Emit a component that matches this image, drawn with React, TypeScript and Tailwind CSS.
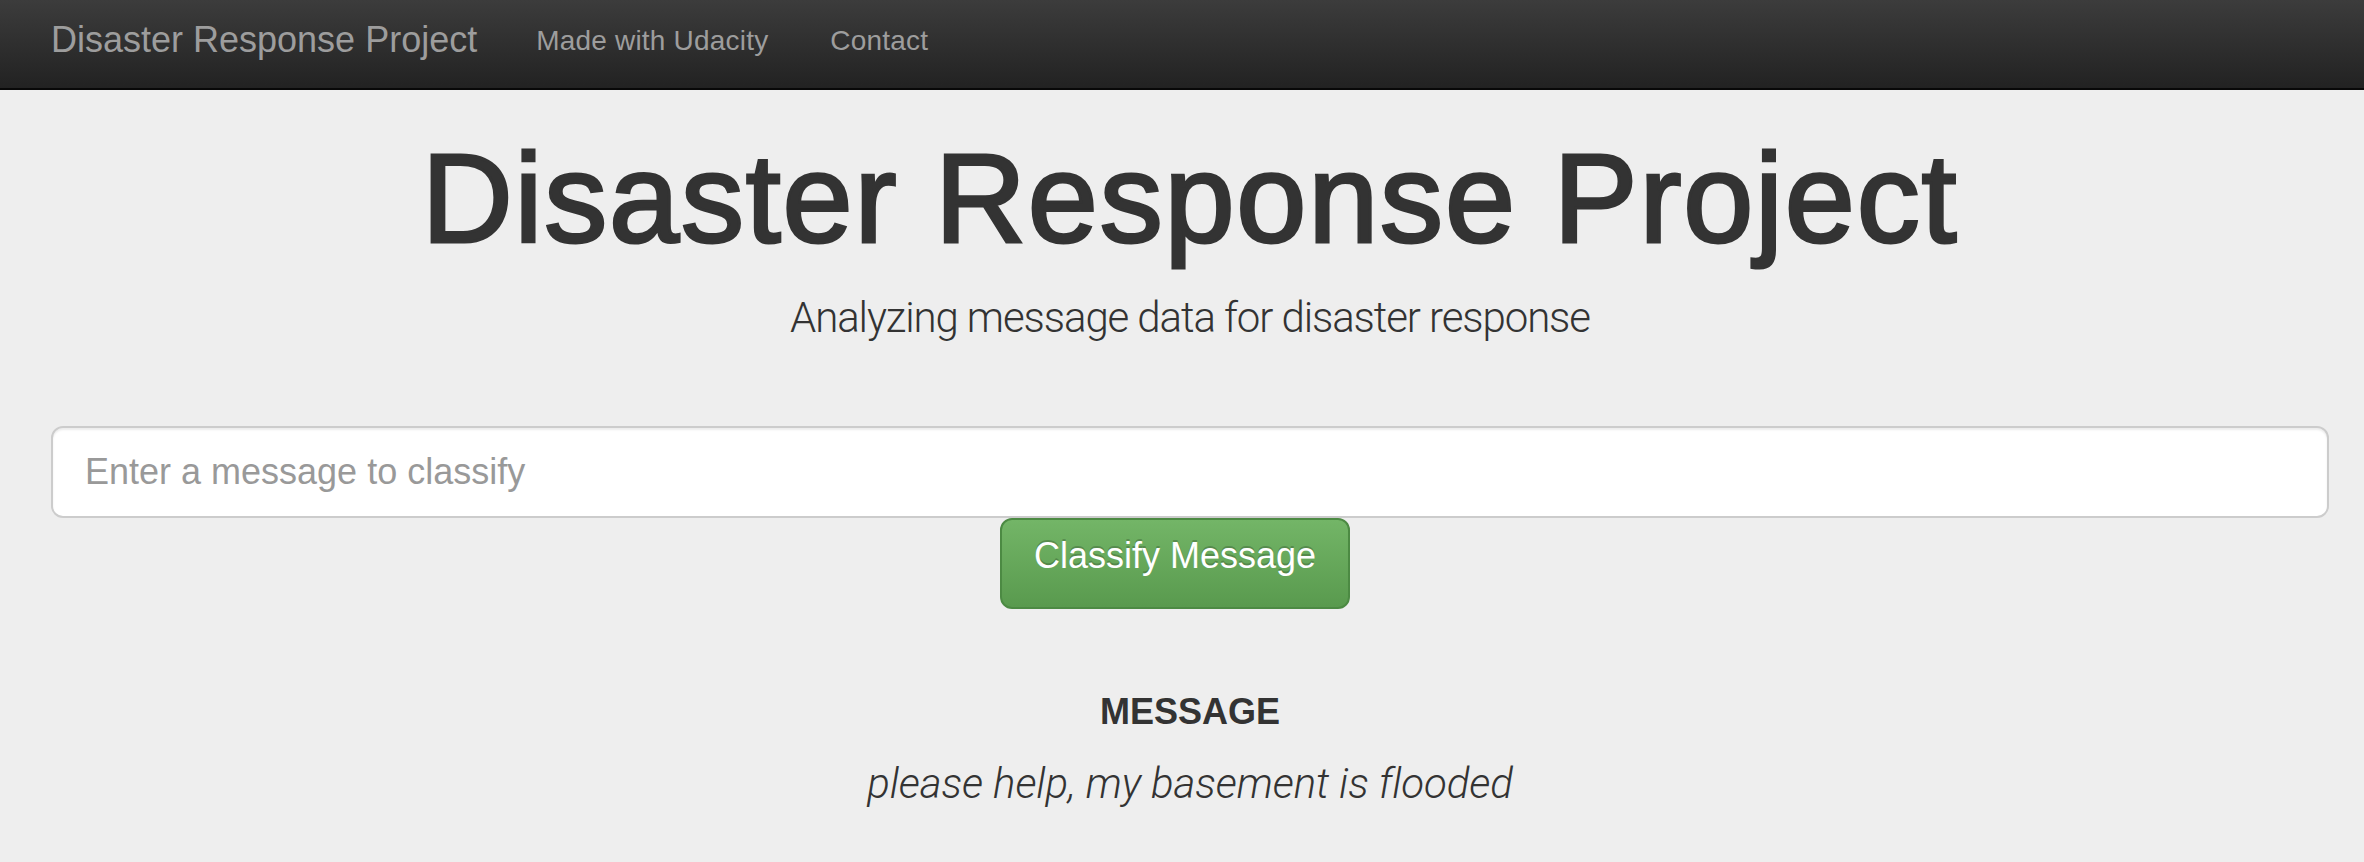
export default function App() {
  return (
    <div className="min-h-[862px] bg-[#eeeeee] font-['Liberation_Sans',Arial,sans-serif] text-[#333333]">
      <nav className="flex h-[90px] items-start border-b-2 border-[#080808] bg-[linear-gradient(to_bottom,#3c3c3c,#222222)] pl-[51px]">
        <a className="mt-[20px] text-[36px] leading-[40px] text-[#9d9d9d]">Disaster Response Project</a>
        <a className="ml-[59px] mt-[21px] text-[28px] leading-[40px] tracking-[0.2px] text-[#9d9d9d]">Made with Udacity</a>
        <a className="ml-[62px] mt-[21px] text-[28px] leading-[40px] tracking-[0.2px] text-[#9d9d9d]">Contact</a>
      </nav>
      <main className="flex flex-col pl-[51px] pr-[35px]">
        <h1 className="mt-[39px] text-center text-[126px] leading-[139px] tracking-[1.8px] [-webkit-text-stroke:3px_#333333]">
          Disaster Response Project
        </h1>
        <p className="mt-[20px] text-center font-['Roboto',sans-serif] text-[42px] font-light leading-[60px] tracking-[-1.1px]">
          Analyzing message data for disaster response
        </p>
        <input
          type="text"
          placeholder="Enter a message to classify"
          className="mt-[78px] h-[92px] w-full rounded-[12px] border-2 border-[#cccccc] bg-white px-[32px] text-[36px] text-[#555555] shadow-[inset_0_2px_2px_rgba(0,0,0,0.075)] outline-none placeholder:text-[#999999]"
        />
        <div className="flex justify-center pr-[30px]">
          <button className="rounded-[12px] border-2 border-[#4c8a43] bg-[linear-gradient(to_bottom,#73b567,#599a4e)] px-[32px] pb-[27px] pt-[12px] text-[36px] leading-[48px] text-white [text-shadow:0_-2px_0_rgba(0,0,0,0.2)]">
            Classify Message
          </button>
        </div>
        <h4 className="mt-[83px] text-center text-[36px] font-bold leading-[40px]">MESSAGE</h4>
        <p className="mt-[22px] text-center font-['Roboto',sans-serif] text-[42px] font-light italic leading-[60px] tracking-[-0.1px]">
          please help, my basement is flooded
        </p>
      </main>
    </div>
  );
}
